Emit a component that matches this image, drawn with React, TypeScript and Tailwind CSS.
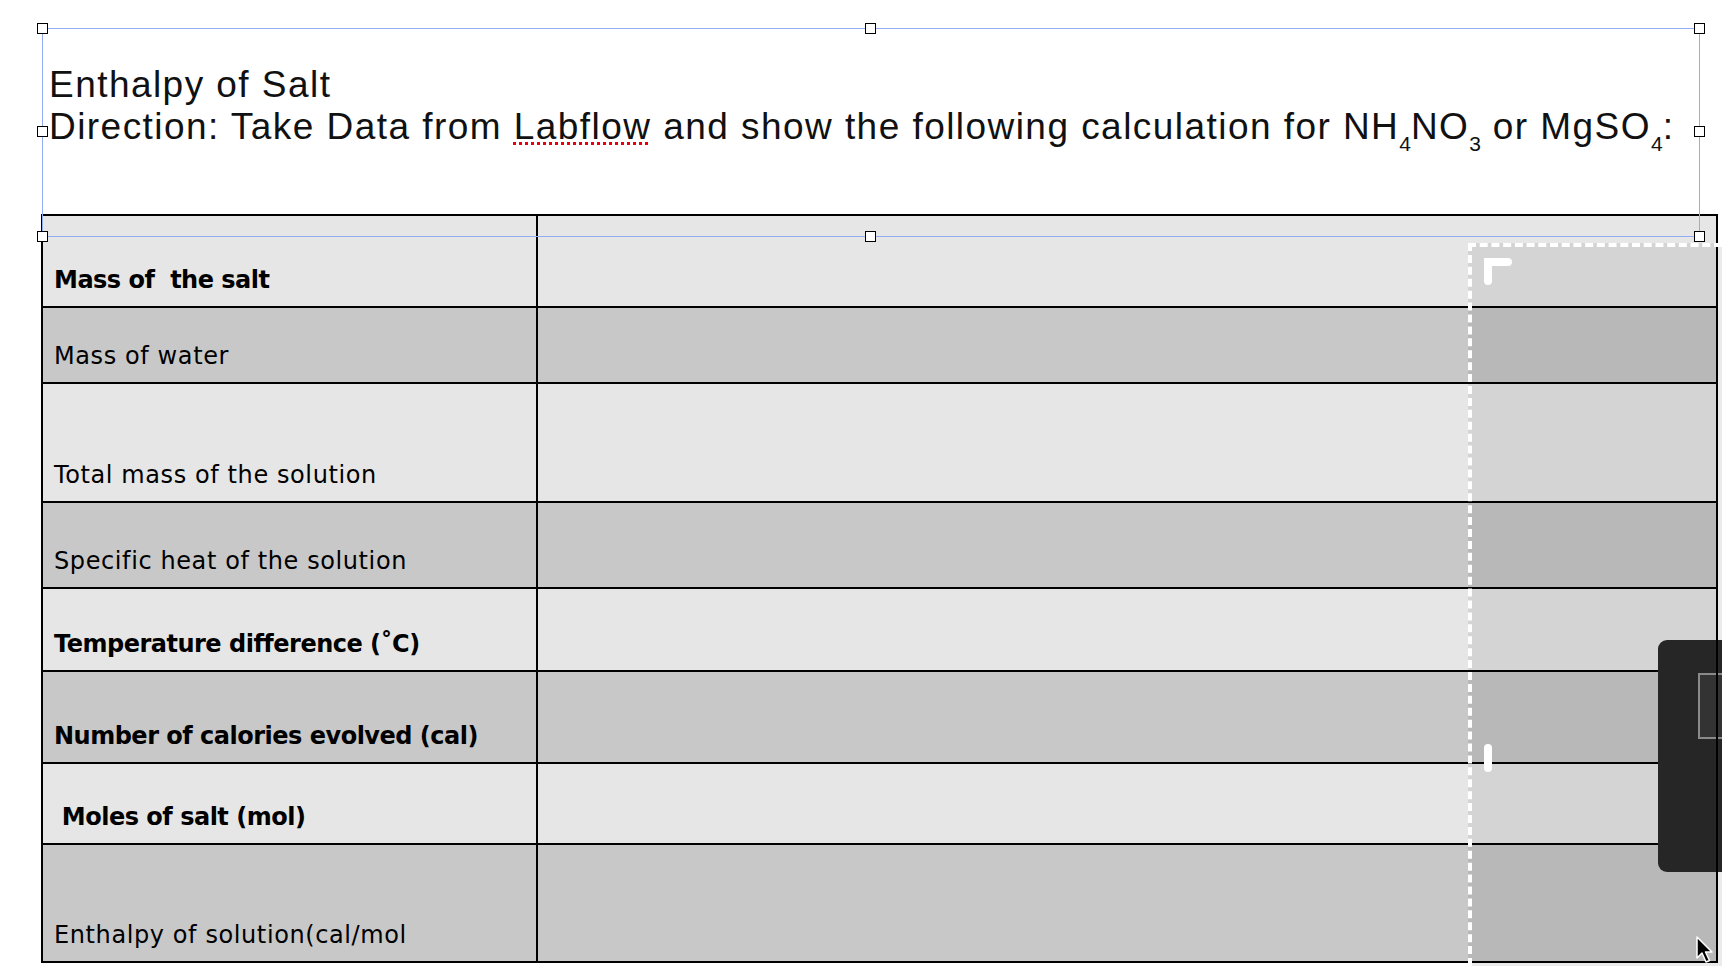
import * as React from "react";

const rows: { label: string; bold?: boolean; h: string; dark?: boolean }[] = [
  { label: "Mass of  the salt", bold: true, h: "h-[92px]" },
  { label: "Mass of water", h: "h-[76px]", dark: true },
  { label: "Total mass of the solution", h: "h-[119px]" },
  { label: "Specific heat of the solution", h: "h-[86px]", dark: true },
  { label: "Temperature difference (˚C)", bold: true, h: "h-[83px]" },
  { label: "Number of calories evolved (cal)", bold: true, h: "h-[92px]", dark: true },
  { label: " Moles of salt (mol)", bold: true, h: "h-[81px]" },
  { label: "Enthalpy of solution(cal/mol", h: "h-[118px]", dark: true },
];

function Sub({ children }: { children: React.ReactNode }) {
  return <span className="align-[-12px] text-[21px] tracking-normal">{children}</span>;
}

// resize handles of the selected text box
function Handle({ className }: { className: string }) {
  return (
    <div
      className={
        "absolute h-[11px] w-[11px] border border-black bg-white " + className
      }
    />
  );
}

export default function App() {
  return (
    <div className="relative h-[966px] w-[1722px] overflow-hidden bg-white">
      {/* title text box */}
      <div className="h-[214px] pl-[49px] pt-[64px] font-['Liberation_Sans',Arial,sans-serif] text-[37px] leading-[42px] tracking-[1.45px] text-[#111]">
        <div>Enthalpy of Salt</div>
        <div className="whitespace-nowrap">
          Direction: Take Data from{" "}
          <span className="underline decoration-red-600 decoration-dotted decoration-[3px] underline-offset-[3px]">
            Labflow
          </span>{" "}
          and show the following calculation for NH<Sub>4</Sub>NO<Sub>3</Sub> or
          MgSO<Sub>4</Sub>:
        </div>
      </div>

      {/* data table */}
      <div className="ml-[41px] w-[1677px] border-x-2 border-t-2 border-black font-['DejaVu_Sans',Verdana,sans-serif] text-[24px] leading-[28px] text-black">
        {rows.map((r, i) => (
          <div
            key={i}
            className={
              "flex border-b-2 border-black " +
              r.h +
              " " +
              (r.dark ? "bg-[#c8c8c8]" : "bg-[#e6e6e6]")
            }
          >
            <div className="flex w-[495px] items-end whitespace-pre border-r-2 border-black pb-[12px] pl-[11px]">
              <span className={r.bold ? "font-bold tracking-[-0.5px]" : "tracking-[0.6px]"}>
                {r.label}
              </span>
            </div>
            <div className="flex-1" />
          </div>
        ))}
      </div>

      {/* selection frame around the title */}
      <div className="absolute left-[42px] top-[28px] h-[209px] w-[1658px] border-[1.5px] border-[#93acf3]">
        <Handle className="-left-[6px] -top-[6px]" />
        <Handle className="left-[822px] -top-[6px]" />
        <Handle className="-right-[6px] -top-[6px]" />
        <Handle className="-left-[6px] top-[97px]" />
        <Handle className="-right-[6px] top-[97px]" />
        <Handle className="-bottom-[6px] -left-[6px]" />
        <Handle className="-bottom-[6px] left-[822px]" />
        <Handle className="-bottom-[6px] -right-[6px]" />
      </div>

      {/* screenshot crop region */}
      <div className="absolute bottom-0 left-[1468px] right-0 top-[243px] border-l-4 border-t-4 border-dashed border-white bg-black/[0.08]">
        <svg className="ml-[12px] mt-[11px]" width="28" height="28" viewBox="0 0 28 28">
          <path
            d="M4 23 V4 H24"
            fill="none"
            stroke="white"
            strokeWidth="8"
            strokeLinecap="round"
            strokeLinejoin="miter"
          />
        </svg>
        <div className="ml-[12px] mt-[458px] h-[28px] w-[8px] rounded-full bg-white" />
      </div>

      {/* floating toolbar */}
      <div className="absolute left-[1658px] right-0 top-[640px] h-[232px] rounded-l-[9px] bg-[#262626]">
        <div className="ml-[40px] mt-[33px] h-[66px] border-2 border-r-0 border-[#8a8a8a] bg-[#333]" />
      </div>
      <div className="absolute left-[1716px] top-[640px] h-[232px] w-[2px] bg-black" />

      {/* mouse pointer */}
      <svg
        className="absolute left-[1694px] top-[934px]"
        width="24"
        height="32"
        viewBox="0 0 24 32"
      >
        <path
          d="M3 3 L3 24 L8 19 L12 28 L15.5 26.5 L11.5 18 L18 18 Z"
          fill="black"
          stroke="white"
          strokeWidth="1.5"
          strokeLinejoin="round"
        />
      </svg>
    </div>
  );
}
